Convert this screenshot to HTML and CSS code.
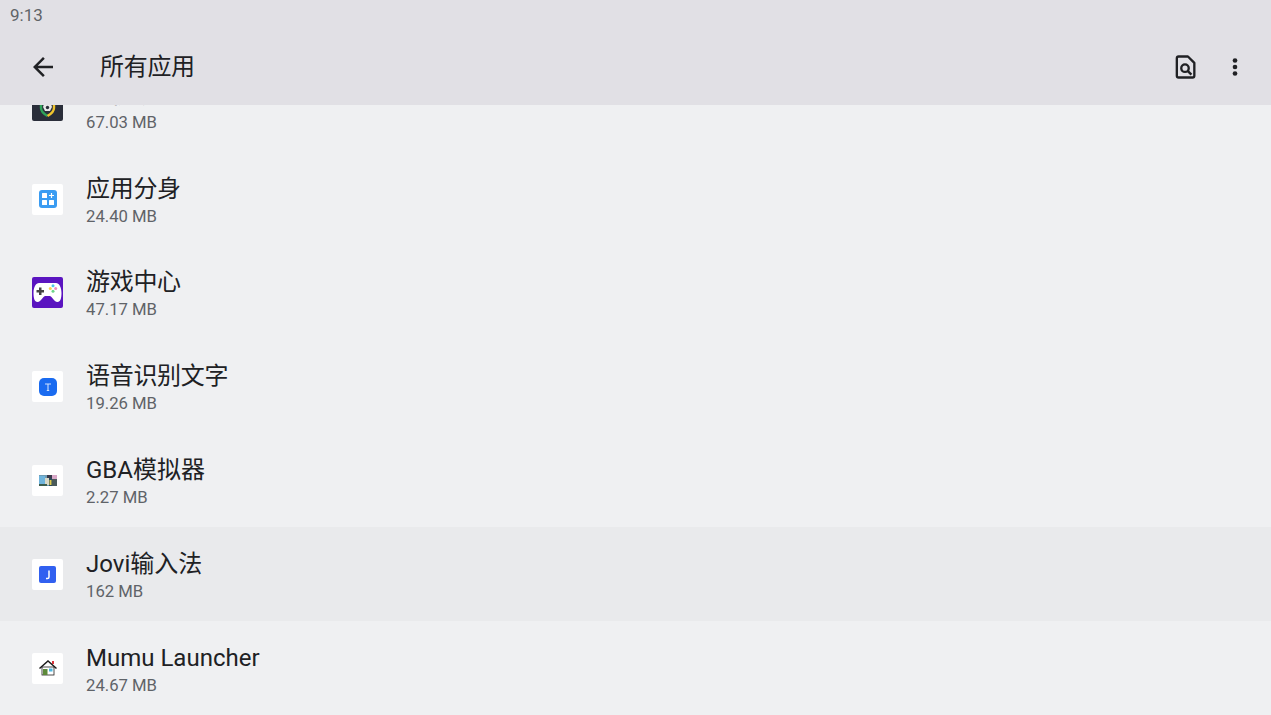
FILE: index.html
```html
<!DOCTYPE html>
<html lang="zh-CN">

<head>
  <meta charset="UTF-8">
  <meta name="viewport" content="width=device-width, initial-scale=1.0">
  <title>所有应用</title>
  <link rel="stylesheet" href="styles.css">
</head>

<body>
  <div class="screen">
    <header class="top">
      <div class="status">9:13</div>
      <div class="toolbar">
        <svg class="back" width="30" height="30" viewBox="0 0 24 24"><path d="M20 11H7.830l5.590-5.590L12 4l-8 8 8 8 1.410-1.410L7.830 13H20z" fill="#202124"/></svg>
        <h1 class="title">所有应用</h1>
        <div class="actions">
          <svg width="28" height="28" viewBox="0 0 24 24"><path d="M6.500 3h8L20 8.500V19.500a1.500 1.500 0 0 1-1.500 1.500h-12A1.500 1.500 0 0 1 5 19.500v-15A1.500 1.500 0 0 1 6.500 3z" fill="none" stroke="#202124" stroke-width="2" stroke-linejoin="round"/><circle cx="12" cy="13" r="3.200" fill="none" stroke="#202124" stroke-width="2"/><path d="M14.500 15.500l3 3" stroke="#202124" stroke-width="2"/></svg>
          <svg width="28" height="28" viewBox="0 0 24 24"><circle cx="12" cy="6.400" r="2" fill="#202124"/><circle cx="12" cy="12" r="2" fill="#202124"/><circle cx="12" cy="17.600" r="2" fill="#202124"/></svg>
        </div>
      </div>
    </header>

    <main class="list">
      <!-- first row is cut off by the toolbar -->
      <div class="row">
        <div class="icon icon-dark">
          <svg width="31" height="31" viewBox="0 0 31 31"><path d="M9 10v8c0 3 3 6 6.500 8" fill="none" stroke="#2fa35a" stroke-width="2.400"/><path d="M22 10v8c0 3-3 6-6.500 8" fill="none" stroke="#f0c52e" stroke-width="2.400"/><path d="M12 14h7l1 3-2 4h-5l-2-4z" fill="#e8e8e8"/><circle cx="15.500" cy="17.500" r="1.700" fill="#2a2e3a"/></svg>
        </div>
        <div class="text">
          <div class="name name-cn">手机助手</div>
          <div class="size">67.03 MB</div>
        </div>
      </div>

      <div class="row">
        <div class="icon">
          <svg width="18" height="18" viewBox="0 0 18 18"><rect width="18" height="18" rx="3" fill="#3a9cf2"/><rect x="3" y="3" width="5" height="5" rx=".5" fill="#fff"/><rect x="3" y="10" width="5" height="5" rx=".5" fill="#fff"/><rect x="10" y="10" width="5" height="5" rx=".5" fill="#fff"/><path d="M12.500 3v5M10 5.500h5" stroke="#fff" stroke-width="1.200"/></svg>
        </div>
        <div class="text">
          <div class="name name-cn">应用分身</div>
          <div class="size">24.40 MB</div>
        </div>
      </div>

      <div class="row">
        <div class="icon icon-purple">
          <svg width="31" height="31" viewBox="0 0 31 31"><path d="M7 6h17c3 0 5.500 4 5.500 10 0 5-1 9-4 9-4 0-5-6-8-6h-4c-3 0-4 6-8 6-3 0-4-4-4-9C1.500 10 4 6 7 6z" fill="#fff"/><path d="M7 10.500h2.500V13H12v2.500H9.500V18H7v-2.500H4.500V13H7z" fill="#444"/><circle cx="21" cy="8.800" r="1.500" fill="#4fc3e8"/><circle cx="18.300" cy="11.500" r="1.500" fill="#f4d44e"/><circle cx="23.700" cy="11.500" r="1.500" fill="#f08ac0"/><circle cx="21" cy="14.200" r="1.500" fill="#6ed68a"/></svg>
        </div>
        <div class="text">
          <div class="name name-cn">游戏中心</div>
          <div class="size">47.17 MB</div>
        </div>
      </div>

      <div class="row">
        <div class="icon">
          <svg width="18" height="18" viewBox="0 0 18 18"><rect width="18" height="18" rx="5" fill="#1a6bf0"/><path d="M6 6h6M9 6v6.500M7.800 12.500h2.400" stroke="#cfe0fb" stroke-width="1.100" fill="none"/></svg>
        </div>
        <div class="text">
          <div class="name name-cn">语音识别文字</div>
          <div class="size">19.26 MB</div>
        </div>
      </div>

      <div class="row">
        <div class="icon">
          <svg width="18" height="11" viewBox="0 0 18 11"><rect width="18" height="11" fill="#6f9db5"/><rect width="6" height="8" y="1" fill="#6fb4dc"/><rect x="6" y="3" width="4" height="7" fill="#d8d8c8"/><rect x="8" width="5" height="3" fill="#3a3a4a"/><rect x="10" y="3" width="3" height="8" fill="#2b4a5a"/><rect x="10.500" y="5" width="2" height="5" fill="#e0c94a"/><rect x="13" width="5" height="4" fill="#d8a8c8"/><rect x="13" y="4" width="5" height="7" fill="#4a5a5a"/><rect y="9" width="8" height="2" fill="#3c5c4c"/></svg>
        </div>
        <div class="text">
          <div class="name">GBA模拟器</div>
          <div class="size">2.27 MB</div>
        </div>
      </div>

      <div class="row row-active">
        <div class="icon">
          <svg width="17" height="17" viewBox="0 0 17 17"><rect width="17" height="17" rx="2" fill="#3160f0"/><path d="M10 4.500v6.500c0 1-.6 1.500-1.600 1.500H7" fill="none" stroke="#fff" stroke-width="1.500"/></svg>
        </div>
        <div class="text">
          <div class="name">Jovi输入法</div>
          <div class="size">162 MB</div>
        </div>
      </div>

      <div class="row">
        <div class="icon">
          <svg width="18" height="16" viewBox="0 0 18 16"><rect x="3" y="7" width="12" height="8" fill="#fff" stroke="#222" stroke-width=".8"/><rect x="4" y="9" width="4.500" height="6" fill="#5d8a3a"/><rect x="10" y="8.500" width="3.500" height="3" fill="#4db8e0"/><path d="M.5 8.500L9 1l8.500 7.500" fill="none" stroke="#1c1c1c" stroke-width="1.500"/><rect x="13" y="1" width="2" height="3" fill="#d8323a"/></svg>
        </div>
        <div class="text">
          <div class="name">Mumu Launcher</div>
          <div class="size">24.67 MB</div>
        </div>
      </div>
    </main>
  </div>
</body>

</html>
```

FILE: styles.css
```css
html,
body {
  margin: 0;
  padding: 0;
  height: 100%;
}

body {
  font-family: Roboto, "Noto Sans CJK SC", sans-serif;
  background-color: #eff0f2;
  overflow: hidden;
}

.screen {
  height: 715px;
  overflow: hidden;
  display: flex;
  flex-direction: column;
}

/* status bar + toolbar */
.top {
  background-color: #e1e0e5;
  height: 105px;
  flex: none;
  position: relative;
  z-index: 1;
}

.status {
  height: 29px;
  padding-left: 10px;
  font-size: 17px;
  line-height: 31px;
  color: #5f6368;
}

.toolbar {
  height: 76px;
  display: flex;
  align-items: center;
  padding-left: 28px;
  padding-right: 22px;
}

.title {
  margin: 0 0 5px 42px;
  font-size: 24px;
  font-weight: 400;
  letter-spacing: -0.3px;
  color: #202124;
}

.actions {
  margin-left: auto;
  display: flex;
  gap: 22px;
}

/* app rows */
.list {
  flex: none;
  margin-top: -46.500px;
}

.row {
  height: 93.800px;
  display: flex;
  align-items: center;
  padding-left: 32px;
}

.row-active {
  background-color: #e9eaec;
}

.icon {
  width: 31px;
  height: 31px;
  flex: none;
  background-color: #fff;
  border-radius: 2px;
  display: flex;
  align-items: center;
  justify-content: center;
  overflow: hidden;
}

.icon-dark {
  background-color: #2a2e3a;
}

.icon-purple {
  background-color: #5a14c0;
}

.text {
  margin-left: 23px;
  padding-top: 4px;
}

.name {
  font-size: 24px;
  line-height: 30px;
  color: #202124;
}

.name-cn {
  letter-spacing: -0.3px;
}

.size {
  margin-top: 1px;
  font-size: 16.700px;
  line-height: 24px;
  color: #5f6368;
}
```
